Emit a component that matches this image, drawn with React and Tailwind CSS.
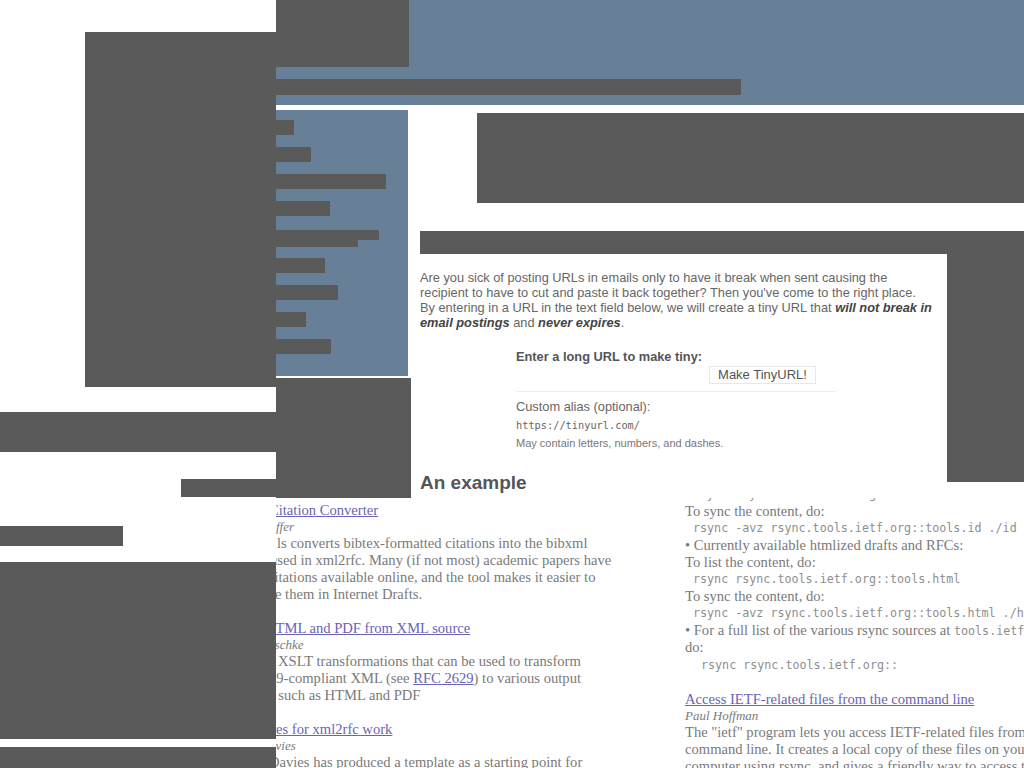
import React from 'react'

// redacted blocks share one colour
const block = 'bg-[#5a5a5a]'
const slate = 'bg-[#687f98]'

export default function App() {
  return (
    <div className="flex h-[768px] w-[1024px] overflow-hidden bg-white font-['Liberation_Sans',Arial,sans-serif]">
      <LeftRail />
      <div className="flex w-[748px] shrink-0 flex-col">
        <Header />
        <div className="mt-[5px] flex h-[388px] shrink-0">
          <SideNav />
          <TinyPanel />
        </div>
        <Articles />
      </div>
    </div>
  )
}

function LeftRail() {
  return (
    <div className="flex w-[276px] shrink-0 flex-col">
      <div className={`ml-[85px] mt-[32px] h-[355px] ${block}`} />
      <div className={`mt-[25px] h-[40px] ${block}`} />
      <div className={`ml-[181px] mt-[27px] h-[18px] ${block}`} />
      <div className={`mt-[29px] h-[20px] w-[123px] ${block}`} />
      <div className={`mt-[16px] h-[177px] ${block}`} />
      <div className={`mt-[8px] h-[21px] ${block}`} />
    </div>
  )
}

function Header() {
  return (
    <div className={`h-[105px] shrink-0 ${slate}`}>
      <div className={`h-[67px] w-[133px] ${block}`} />
      <div className={`mt-[12px] h-[16px] w-[465px] ${block}`} />
    </div>
  )
}

function SideNav() {
  return (
    <div className="flex w-[135px] shrink-0 flex-col">
      <div className={`flex h-[266px] w-[132px] flex-col ${slate}`}>
        <div className={`mt-[10px] h-[15px] w-[18px] ${block}`} />
        <div className={`mt-[12px] h-[15px] w-[35px] ${block}`} />
        <div className={`mt-[12px] h-[15px] w-[110px] ${block}`} />
        <div className={`mt-[12px] h-[15px] w-[54px] ${block}`} />
        <div className={`mt-[14px] h-[10px] w-[103px] ${block}`} />
        <div className={`mt-[-7px] h-[14px] w-[82px] ${block}`} />
        <div className={`mt-[11px] h-[15px] w-[49px] ${block}`} />
        <div className={`mt-[12px] h-[15px] w-[62px] ${block}`} />
        <div className={`mt-[12px] h-[15px] w-[30px] ${block}`} />
        <div className={`mt-[12px] h-[15px] w-[55px] ${block}`} />
      </div>
      <div className={`mt-[2px] h-[120px] ${block}`} />
    </div>
  )
}

function TinyPanel() {
  return (
    <div className="flex min-w-0 flex-1 flex-col">
      <div className={`ml-[66px] mt-[3px] h-[90px] shrink-0 ${block}`} />
      <div className={`ml-[9px] mt-[28px] h-[23px] shrink-0 ${block}`} />
      <div className="flex">
        <div className="w-[536px] shrink-0 pl-[9px] pt-[16px] text-[12.8px] leading-[15px] text-[#666]">
          <p>
            Are you sick of posting URLs in emails only to have it break when sent causing the<br />
            recipient to have to cut and paste it back together? Then you've come to the right place.<br />
            By entering in a URL in the text field below, we will create a tiny URL that{' '}
            <b className="italic text-[#444]">will not break in</b>
            <br />
            <b className="italic text-[#444]">email postings</b> and{' '}
            <b className="italic text-[#444]">never expires</b>.
          </p>

          <form className="ml-[96px] mt-[19px]" onSubmit={e => e.preventDefault()}>
            <label className="block font-bold text-[#555]">Enter a long URL to make tiny:</label>
            <div className="mt-[2px] flex">
              <div className="h-[18px] w-[193px]" />
              <button
                type="submit"
                className="h-[18px] w-[107px] border border-[#e8e8e8] bg-white text-[13px] leading-[16px] text-[#555]"
              >
                Make TinyURL!
              </button>
            </div>
            <div className="mt-[7px] h-px w-[320px] bg-[#ececec]" />
            <div className="mt-[7px]">Custom alias (optional):</div>
            <div className="mt-[4px] font-['DejaVu_Sans_Mono',monospace] text-[10.3px] leading-[14px] text-[#666]">
              https://tinyurl.com/
            </div>
            <div className="mt-[4px] text-[11px] leading-[14px] text-[#777]">
              May contain letters, numbers, and dashes.
            </div>
          </form>

          <h2 className="mt-[22px] text-[19px] font-bold leading-[22px] text-[#555]">An example</h2>
        </div>
        <div className={`h-[228px] w-[77px] shrink-0 ${block}`} />
      </div>
    </div>
  )
}

function Title({ children, className = '' }) {
  return <a href="#" className={`block text-[#6b63b5] underline ${className}`}>{children}</a>
}

function Author({ children, className = '' }) {
  return <div className={`text-[13px] italic leading-[16px] ${className}`}>{children}</div>
}

function MonoLine({ children, className = '' }) {
  return (
    <div className={`font-['DejaVu_Sans_Mono',monospace] text-[11.7px] leading-[17px] text-[#8e8e8e] ${className}`}>
      {children}
    </div>
  )
}

function Articles() {
  return (
    <div className="flex min-h-0 flex-1 overflow-hidden whitespace-nowrap font-['Liberation_Serif',serif] text-[14.6px] leading-[17px] text-[#7a7a7a]">
      {/* left column, cut by the rail */}
      <div className="w-[409px] shrink-0 overflow-hidden pt-[3.5px]">
        <div className="mb-[17px]">
          <Title className="ml-[-7px]">Citation Converter</Title>
          <Author>ffer</Author>
          <div className="ml-[1px]">ls converts bibtex-formatted citations into the bibxml</div>
          <div className="ml-[-6px]">used in xml2rfc. Many (if not most) academic papers have</div>
          <div className="ml-[-8px]">citations available online, and the tool makes it easier to</div>
          <div className="ml-[-14px]">use them in Internet Drafts.</div>
        </div>
        <div className="mb-[17px]">
          <Title className="ml-[-11px]">HTML and PDF from XML source</Title>
          <Author className="ml-[-7px]">eschke</Author>
          <div className="ml-[2px]">XSLT transformations that can be used to transform</div>
          <div className="ml-[-7px]">
            29-compliant XML (see <a href="#" className="text-[#6b63b5] underline">RFC 2629</a>) to various output
          </div>
          <div className="ml-[-7px]">s such as HTML and PDF</div>
        </div>
        <div>
          <Title className="ml-[-4px]">tes for xml2rfc work</Title>
          <Author className="ml-[-7px]">avies</Author>
          <div className="ml-[-7px]">Davies has produced a template as a starting point for</div>
        </div>
      </div>

      {/* right column, its first line sits under the panel above */}
      <div className="mt-[-12px] shrink-0">
        <MonoLine className="pl-2">rsync rsync.tools.ietf.org::tools.id</MonoLine>
        <div>To sync the content, do:</div>
        <MonoLine className="pl-2">rsync -avz rsync.tools.ietf.org::tools.id ./id</MonoLine>
        <div>• Currently available htmlized drafts and RFCs:</div>
        <div>To list the content, do:</div>
        <MonoLine className="pl-2">rsync rsync.tools.ietf.org::tools.html</MonoLine>
        <div>To sync the content, do:</div>
        <MonoLine className="pl-2">rsync -avz rsync.tools.ietf.org::tools.html ./html</MonoLine>
        <div>
          • For a full list of the various rsync sources at{' '}
          <span className="font-['DejaVu_Sans_Mono',monospace] text-[11.7px] leading-none text-[#8e8e8e]">tools.ietf.org</span>,
        </div>
        <div>do:</div>
        <MonoLine className="mt-[1px] pl-4">rsync rsync.tools.ietf.org::</MonoLine>
        <div className="mt-[17px]">
          <Title>Access IETF-related files from the command line</Title>
          <Author>Paul Hoffman</Author>
          <div>The "ietf" program lets you access IETF-related files from the</div>
          <div>command line. It creates a local copy of these files on your</div>
          <div>computer using rsync, and gives a friendly way to access them.</div>
        </div>
      </div>
    </div>
  )
}
